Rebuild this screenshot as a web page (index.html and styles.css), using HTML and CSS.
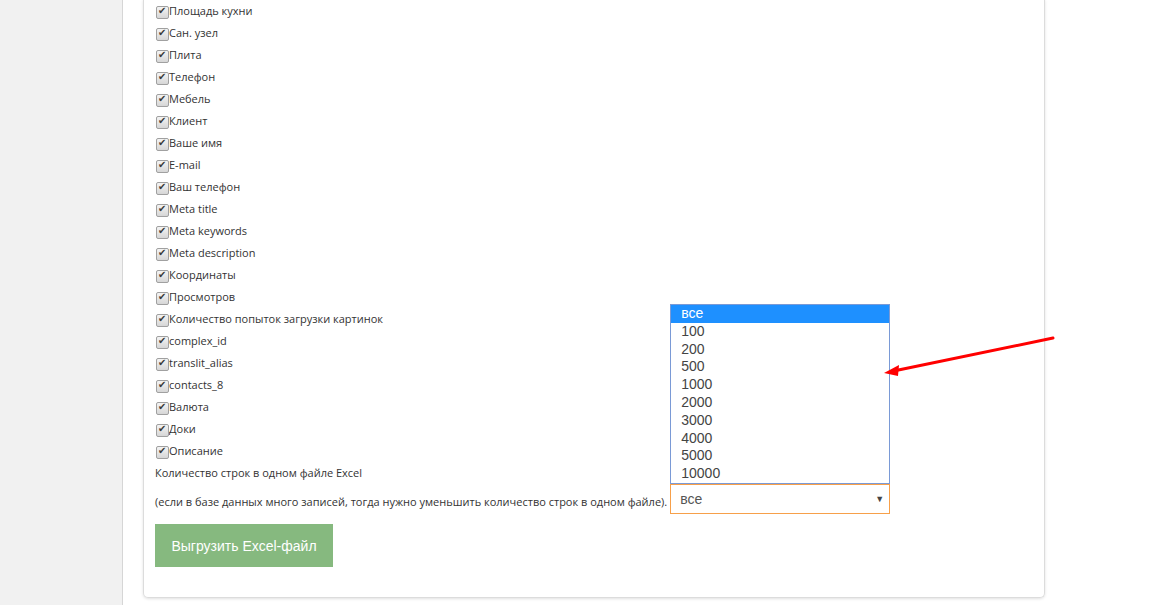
FILE: index.html
```html
<!DOCTYPE html>
<html lang="ru">
<head>
    <meta charset="UTF-8">
    <meta name="viewport" content="width=device-width, initial-scale=1.0">
    <title>Экспорт в Excel</title>
    <link rel="stylesheet" href="styles.css">
</head>
<body>
    <aside class="sidebar"></aside>

    <main class="content">
        <section class="card">
            <div class="fields">
                <label class="field"><span class="cb"></span>Площадь кухни</label>
                <label class="field"><span class="cb"></span>Сан. узел</label>
                <label class="field"><span class="cb"></span>Плита</label>
                <label class="field"><span class="cb"></span>Телефон</label>
                <label class="field"><span class="cb"></span>Мебель</label>
                <label class="field"><span class="cb"></span>Клиент</label>
                <label class="field"><span class="cb"></span>Ваше имя</label>
                <label class="field"><span class="cb"></span>E-mail</label>
                <label class="field"><span class="cb"></span>Ваш телефон</label>
                <label class="field"><span class="cb"></span>Meta title</label>
                <label class="field"><span class="cb"></span>Meta keywords</label>
                <label class="field"><span class="cb"></span>Meta description</label>
                <label class="field"><span class="cb"></span>Координаты</label>
                <label class="field"><span class="cb"></span>Просмотров</label>
                <label class="field"><span class="cb"></span>Количество попыток загрузки картинок</label>
                <label class="field"><span class="cb"></span>complex_id</label>
                <label class="field"><span class="cb"></span>translit_alias</label>
                <label class="field"><span class="cb"></span>contacts_8</label>
                <label class="field"><span class="cb"></span>Валюта</label>
                <label class="field"><span class="cb"></span>Доки</label>
                <label class="field"><span class="cb"></span>Описание</label>
            </div>

            <p class="rows_title">Количество строк в одном файле Excel</p>
            <div class="rows_line">
                <span class="rows_hint">(если в базе данных много записей, тогда нужно уменьшить количество строк в одном файле).</span>
                <div class="select">
                    <span>все</span>
                    <span class="select_arrow">&#9660;</span>
                    <ul class="options">
                        <li class="selected">все</li>
                        <li>100</li>
                        <li>200</li>
                        <li>500</li>
                        <li>1000</li>
                        <li>2000</li>
                        <li>3000</li>
                        <li>4000</li>
                        <li>5000</li>
                        <li>10000</li>
                    </ul>
                </div>
            </div>

            <button class="btn_export" type="button">Выгрузить Excel-файл</button>
        </section>
    </main>

    <svg class="pointer" width="1155" height="605" viewBox="0 0 1155 605">
        <line x1="1053" y1="338" x2="896" y2="370.5" stroke="#ff0000" stroke-width="3" stroke-linecap="round"/>
        <polygon points="884,373 899,365 898,376" fill="#ff0000"/>
    </svg>
</body>
</html>
```

FILE: styles.css
```css
*{
    margin: 0;
    padding: 0;
    box-sizing: border-box;
}
body{
    width: 1155px;
    height: 605px;
    overflow: hidden;
    display: flex;
    background-color: #fff;
    font-family: "Open Sans", "Liberation Sans", sans-serif;
    font-size: 11px;
    color: #333;
    position: relative;
}
.sidebar{
    width: 123px;
    flex-shrink: 0;
    background-color: #f1f1f1;
    border-right: 1px solid #d6d6d6;
}
.content{
    flex: 1;
    padding-left: 20px;
    padding-right: 110px;
}
.card{
    border: 1px solid #dcdcdc;
    border-top: none;
    border-radius: 0 0 5px 5px;
    box-shadow: 0 1px 3px rgba(0,0,0,0.12);
    padding: 0 12px 31px 11px;
    height: 599px;
}
.fields{
    display: flex;
    flex-direction: column;
    margin-top: -1px;
}
.field{
    height: 22px;
    display: flex;
    align-items: center;
}
.cb{
    width: 13px;
    height: 13px;
    margin-top: 5px;
    margin-left: 1px;
    border: 1px solid #a0a0a0;
    border-radius: 2px;
    background: linear-gradient(#f4f4f4, #d6d6d6);
    position: relative;
    flex-shrink: 0;
}
.cb::after{
    content: "\2714";
    position: absolute;
    left: 1px;
    top: -2px;
    font-family: "DejaVu Sans", sans-serif;
    font-size: 10px;
    color: #3a3a3a;
}
.rows_title{
    height: 22px;
    line-height: 22px;
    margin-top: 1px;
}
.rows_line{
    display: flex;
    align-items: flex-end;
}
.rows_hint{
    line-height: 22px;
    padding-bottom: 1px;
    margin-right: 3px;
}
.select{
    width: 220px;
    height: 30px;
    border: 1px solid #f7a04a;
    position: relative;
    display: flex;
    align-items: center;
    justify-content: space-between;
    padding: 0 5px 0 9px;
    font-family: "Liberation Sans", Arial, sans-serif;
    font-size: 14px;
    color: #555;
}
.select_arrow{
    font-size: 9px;
    color: #444;
}
.options{
    list-style: none;
    position: absolute;
    left: -1px;
    bottom: 29px;
    width: 220px;
    height: 180px;
    border: 1px solid #7a9ad6;
    background-color: #fff;
}
.options li{
    height: 17.8px;
    line-height: 17.8px;
    padding-left: 10px;
    color: #444;
}
.options li.selected{
    background-color: #1e90ff;
    color: #fff;
}
.btn_export{
    margin-top: 10px;
    width: 178px;
    height: 43px;
    border: none;
    background-color: #86b97f;
    color: #fff;
    font-family: "Liberation Sans", Arial, sans-serif;
    font-size: 14px;
}
.pointer{
    position: absolute;
    left: 0;
    top: 0;
    pointer-events: none;
}
```
